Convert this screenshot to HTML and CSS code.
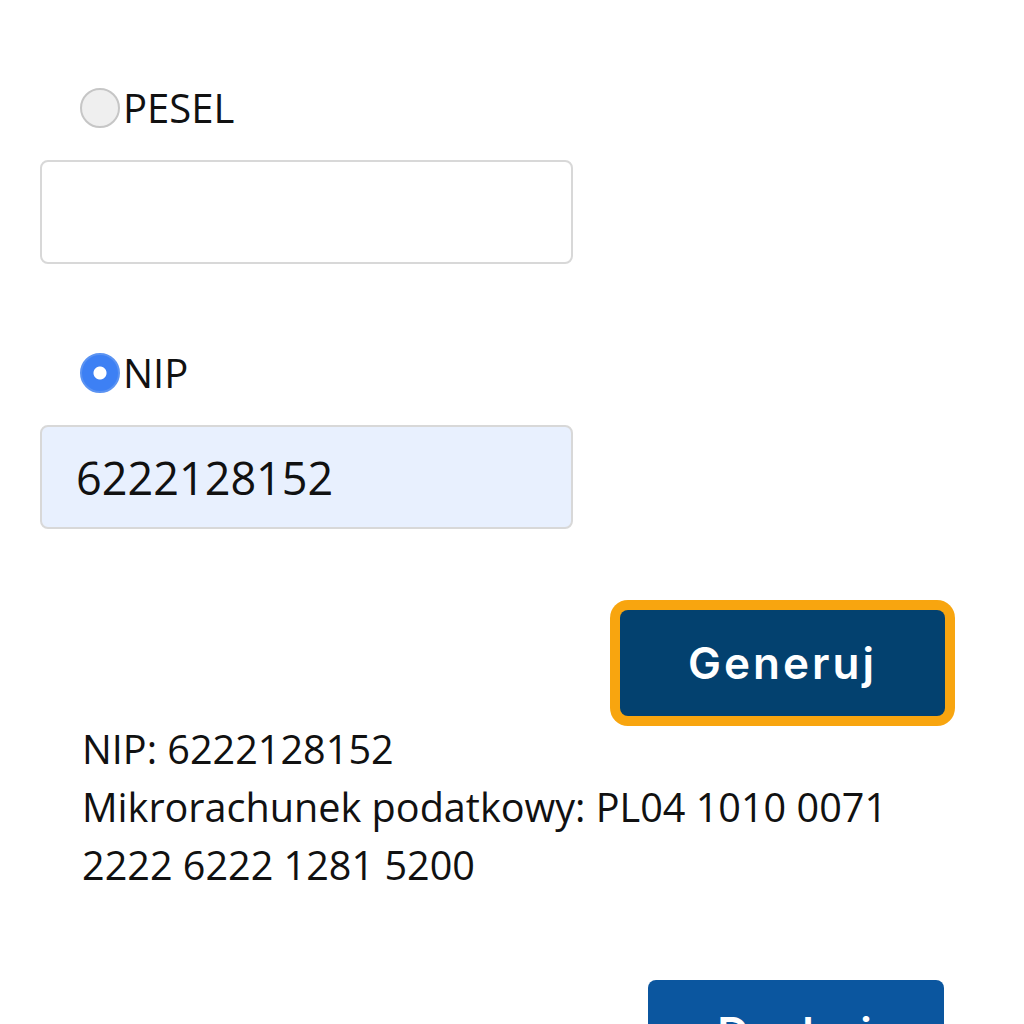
FILE: index.html
```html
<!DOCTYPE html>
<html lang="pl">
<head>
  <meta charset="UTF-8">
  <meta name="viewport" content="width=device-width, initial-scale=1.0">
  <title>Mikrorachunek podatkowy</title>
  <link rel="stylesheet" href="styles.css">
</head>
<body>
  <main class="generator">
    <form class="id-form">
      <label class="choice">
        <input type="radio" name="idtype" value="pesel">
        <span>PESEL</span>
      </label>
      <input class="id-input" type="text" name="pesel">

      <label class="choice choice-next">
        <input type="radio" name="idtype" value="nip" checked>
        <span>NIP</span>
      </label>
      <input class="id-input filled" type="text" name="nip" value="6222128152">

      <div class="actions">
        <button type="button" class="button button-focus">Generuj</button>
      </div>
    </form>

    <div class="result">
      <p>NIP: 6222128152</p>
      <p>Mikrorachunek podatkowy: PL04 1010 0071 2222 6222 1281 5200</p>
    </div>

    <div class="actions print-row">
      <button type="button" class="button button-print">Drukuj</button>
    </div>
  </main>
</body>
</html>
```

FILE: styles.css
```css
/* General Reset */
body, html {
  margin: 0;
  padding: 0;
  background: #fff;
  color: #111;
  font-family: 'Open Sans', 'Noto Sans', sans-serif;
  overflow: hidden;
}

.generator {
  width: 1024px;
  padding-top: 79px;
}

.id-form {
  display: flex;
  flex-direction: column;
  padding-left: 40px;
}

.choice {
  display: flex;
  align-items: center;
  gap: 3px;
  padding-left: 40px;
  font-size: 40px;
  line-height: 58px;
}

.choice-next {
  margin-top: 80px;
}

.choice input {
  appearance: none;
  -webkit-appearance: none;
  margin: 0;
  width: 40px;
  height: 40px;
  border-radius: 50%;
  border: 2px solid #c6c6c6;
  background: #efefef;
  box-sizing: border-box;
}

.choice input:checked {
  border-color: #5b93f2;
  background: radial-gradient(circle, #fff 0, #fff 6px, #3d80f4 7px);
}

.id-input {
  box-sizing: border-box;
  width: 533px;
  height: 104px;
  margin-top: 23px;
  padding: 0 34px;
  border: 2px solid #d8d8d8;
  border-radius: 8px;
  background: #fff;
  font-family: 'Open Sans', 'Noto Sans', sans-serif;
  font-size: 45px;
  color: #111;
  outline: none;
}

.id-input.filled {
  background: #e8f0fe;
}

.actions {
  display: flex;
  justify-content: flex-end;
  padding-right: 79px;
}

.id-form .actions {
  margin-top: 81px;
}

.button {
  width: 325px;
  height: 106px;
  border: 0;
  border-radius: 8px;
  color: #fff;
  font-family: 'Inter', 'Open Sans', sans-serif;
  font-weight: 600;
  font-size: 44px;
  letter-spacing: 3px;
  cursor: pointer;
}

.button-focus {
  background: #03416f;
  box-shadow: 0 0 0 10px #f8a50f;
}

.button-print {
  width: 296px;
  background: #0b569f;
}

.result {
  padding: 4px 70px 0 82px;
  font-size: 39.6px;
  line-height: 58px;
}

.result p {
  margin: 0;
}

.print-row {
  margin-top: 86px;
  padding-right: 80px;
}
```
